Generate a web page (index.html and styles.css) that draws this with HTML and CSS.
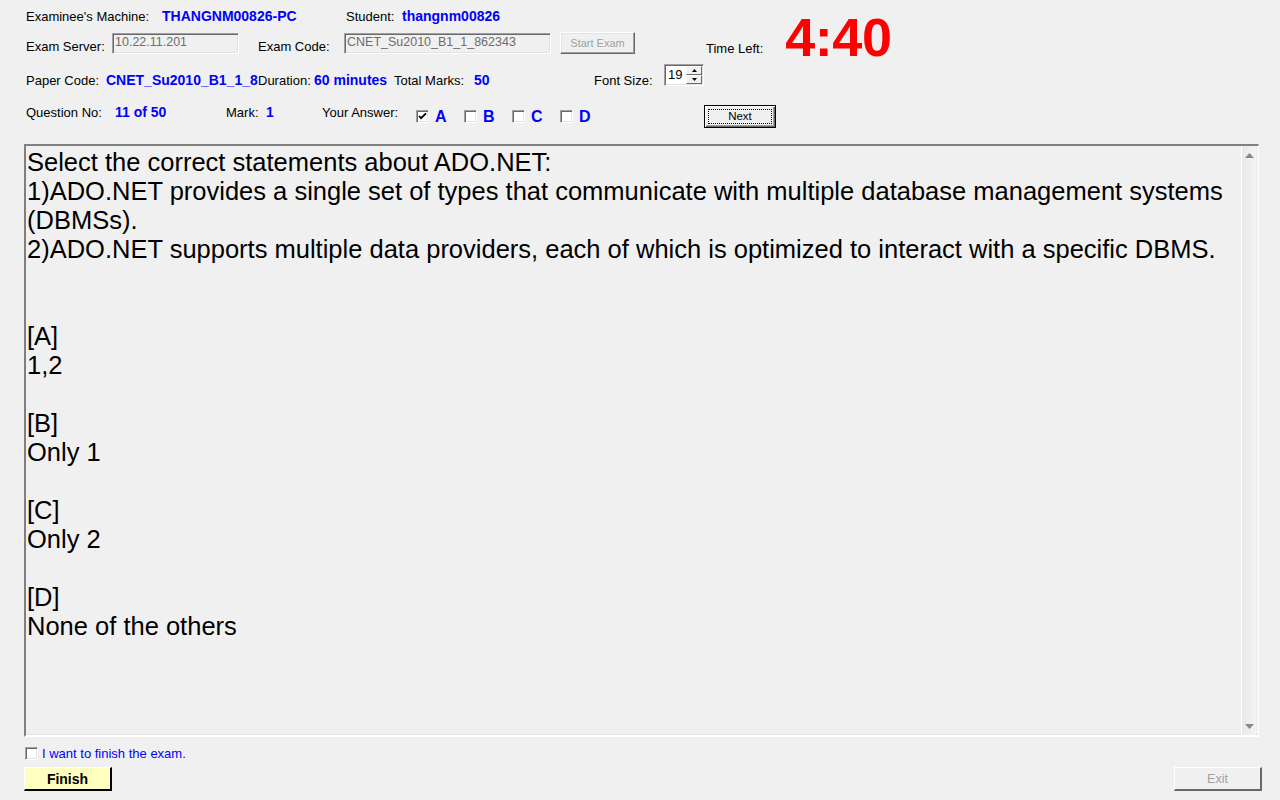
FILE: index.html
```html
<!DOCTYPE html>
<html>
<head>
<meta charset="utf-8">
<link rel="stylesheet" href="styles.css">
</head>
<body>
<div class="form">
  <div class="row r1">
    <span class="lbl w136">Examinee's Machine:</span>
    <span class="val w184">THANGNM00826-PC</span>
    <span class="lbl w56">Student:</span>
    <span class="val">thangnm00826</span>
  </div>
  <div class="row r2">
    <span class="lbl w86 low">Exam Server:</span>
    <span class="tbox w127">10.22.11.201</span>
    <span class="lbl w86 low ml19">Exam Code:</span>
    <span class="tbox w207">CNET_Su2010_B1_1_862343</span>
    <span class="btn start">Start Exam</span>
    <span class="lbl low timelbl">Time Left:</span>
    <span class="timer">4:40</span>
  </div>
  <div class="row r3">
    <span class="lbl w80">Paper Code:</span>
    <span class="val w152 clip">CNET_Su2010_B1_1_862343</span>
    <span class="lbl w56">Duration:</span>
    <span class="val w80">60 minutes</span>
    <span class="lbl w80">Total Marks:</span>
    <span class="val w120">50</span>
    <span class="lbl w70">Font Size:</span>
    <span class="updown">
      <span class="udval">19</span>
      <span class="udbtns">
        <span class="udb"><svg width="5" height="3" viewBox="0 0 5 3"><path d="M2.5 0L5 3H0z" fill="#000"/></svg></span>
        <span class="udb"><svg width="5" height="3" viewBox="0 0 5 3"><path d="M0 0H5L2.5 3z" fill="#000"/></svg></span>
      </span>
    </span>
  </div>
  <div class="row r4">
    <span class="lbl w89">Question No:</span>
    <span class="val w111">11 of 50</span>
    <span class="lbl w40">Mark:</span>
    <span class="val w56">1</span>
    <span class="lbl w94">Your Answer:</span>
    <span class="opt"><span class="cb"><svg width="9" height="9" viewBox="0 0 9 9"><path d="M1 4l2 2.2L8 1.3" stroke="#000" stroke-width="1.8" fill="none"/></svg></span><span class="optl">A</span></span>
    <span class="opt"><span class="cb"></span><span class="optl">B</span></span>
    <span class="opt"><span class="cb"></span><span class="optl">C</span></span>
    <span class="opt"><span class="cb"></span><span class="optl">D</span></span>
    <span class="btn next"><span class="focus">Next</span></span>
  </div>
  <div class="qbox">
    <div class="qtext">
      <div class="ln">Select the correct statements about ADO.NET:</div>
      <div class="ln">1)ADO.NET provides a single set of types that communicate with multiple database management systems</div>
      <div class="ln">(DBMSs).</div>
      <div class="ln">2)ADO.NET supports multiple data providers, each of which is optimized to interact with a specific DBMS.</div>
      <div class="ln">&nbsp;</div>
      <div class="ln">&nbsp;</div>
      <div class="ln">[A]</div>
      <div class="ln">1,2</div>
      <div class="ln">&nbsp;</div>
      <div class="ln">[B]</div>
      <div class="ln">Only 1</div>
      <div class="ln">&nbsp;</div>
      <div class="ln">[C]</div>
      <div class="ln">Only 2</div>
      <div class="ln">&nbsp;</div>
      <div class="ln">[D]</div>
      <div class="ln">None of the others</div>
    </div>
    <div class="vscroll">
      <span class="arr"><svg width="9" height="5" viewBox="0 0 9 5"><path d="M4.5 0L9 5H0z" fill="#888"/></svg></span>
      <span class="arr"><svg width="9" height="5" viewBox="0 0 9 5"><path d="M0 0H9L4.5 5z" fill="#888"/></svg></span>
    </div>
  </div>
  <div class="finishrow">
    <span class="cb fcb"></span><span class="finlbl">I want to finish the exam.</span>
  </div>
  <div class="btnrow">
    <span class="btn finish">Finish</span>
    <span class="btn exit">Exit</span>
  </div>
</div>
</body>
</html>
```

FILE: styles.css
```css
html, body {
  margin: 0;
  padding: 0;
  background: #f0f0f0;
}
body {
  width: 1280px;
  height: 800px;
  overflow: hidden;
  font-family: "Liberation Sans", Arial, sans-serif;
  font-size: 13px;
  color: #000;
}
.form {
  padding-left: 26px;
}
.row {
  display: flex;
  align-items: center;
  white-space: nowrap;
}
.lbl, .val {
  display: inline-block;
  flex: none;
}
.val {
  color: #0000ff;
  font-weight: bold;
  font-size: 14px;
}
.clip { overflow: hidden; }
.w40 { width: 40px; }
.w56 { width: 56px; }
.w70 { width: 70px; }
.w80 { width: 80px; }
.w86 { width: 86px; }
.w89 { width: 89px; }
.w94 { width: 94px; }
.w111 { width: 111px; }
.w120 { width: 120px; }
.w127 { width: 127px; }
.w136 { width: 136px; }
.w152 { width: 152px; }
.w184 { width: 184px; }
.w207 { width: 207px; }
.ml19 { margin-left: 19px; }

.r1 { height: 16px; padding-top: 8px; }
.r2 {
  height: 30px;
  margin-top: 8px;
  align-items: flex-start;
}
.low { margin-top: 7px; }
.tbox {
  flex: none;
  box-sizing: border-box;
  height: 21px;
  margin-top: 1px;
  padding: 1px 2px;
  color: #6d6d6d;
  background: #f0f0f0;
  font-size: 12.5px;
  border-top: 1px solid #a0a0a0;
  border-left: 1px solid #a0a0a0;
  border-right: 1px solid #fff;
  border-bottom: 1px solid #fff;
  box-shadow: inset 1px 1px 0 #696969, inset -1px -1px 0 #e3e3e3;
  overflow: hidden;
}
.btn {
  flex: none;
  box-sizing: border-box;
  display: inline-flex;
  align-items: center;
  justify-content: center;
  background: #f0f0f0;
  font-size: 11px;
}
.start {
  margin-left: 9px;
  width: 75px;
  height: 22px;
  color: #a0a0a0;
  border-top: 1px solid #fff;
  border-left: 1px solid #fff;
  border-right: 1px solid #696969;
  border-bottom: 1px solid #696969;
  box-shadow: inset -1px -1px 0 #a0a0a0, inset 1px 1px 0 #e3e3e3;
}
.timelbl { margin-left: 71px; margin-top: 9px; }
.timer {
  flex: none;
  margin-left: 22px;
  margin-top: -26px;
  color: #ff0000;
  font-weight: bold;
  font-size: 54px;
  line-height: 62px;
  letter-spacing: -0.5px;
}

.r3 { height: 22px; margin-top: 2px; }
.r3 .lbl, .r3 .val { position: relative; top: 5px; }
.updown {
  flex: none;
  box-sizing: border-box;
  width: 40px;
  height: 22px;
  display: flex;
  background: #fff;
  border-top: 1px solid #a0a0a0;
  border-left: 1px solid #a0a0a0;
  border-right: 1px solid #fff;
  border-bottom: 1px solid #fff;
  box-shadow: inset 1px 1px 0 #696969, inset -1px -1px 0 #e3e3e3;
  padding: 1px 1px 1px 3px;
}
.udval {
  flex: 1;
  font-size: 13px;
  line-height: 17px;
}
.udbtns {
  width: 16px;
  display: flex;
  flex-direction: column;
}
.udb {
  flex: 1;
  box-sizing: border-box;
  display: flex;
  align-items: center;
  justify-content: center;
  background: #f0f0f0;
  border-top: 1px solid #fff;
  border-left: 1px solid #fff;
  border-right: 1px solid #696969;
  border-bottom: 1px solid #696969;
}

.r4 { height: 24px; margin-top: 18px; }
.r4 .lbl, .r4 .val { position: relative; top: -4px; }
.opt {
  flex: none;
  width: 48px;
  display: flex;
  align-items: center;
}
.cb {
  flex: none;
  box-sizing: border-box;
  width: 13px;
  height: 13px;
  display: inline-flex;
  align-items: center;
  justify-content: center;
  background: #fff;
  border-top: 1px solid #a0a0a0;
  border-left: 1px solid #a0a0a0;
  border-right: 1px solid #fff;
  border-bottom: 1px solid #fff;
  box-shadow: inset 1px 1px 0 #696969, inset -1px -1px 0 #e3e3e3;
}
.optl {
  margin-left: 6px;
  color: #0000ff;
  font-weight: bold;
  font-size: 16px;
  position: relative;
  top: 1px;
}
.next {
  margin-left: 96px;
  width: 72px;
  height: 23px;
  border: 1px solid #000;
  box-shadow: inset 1px 1px 0 #fff, inset -1px -1px 0 #696969, inset -2px -2px 0 #a0a0a0;
  padding: 3px;
  font-size: 11.5px;
}
.focus {
  box-sizing: border-box;
  width: 100%;
  height: 100%;
  border: 1px dotted #000;
  display: flex;
  align-items: center;
  justify-content: center;
}

.qbox {
  box-sizing: border-box;
  margin-left: -2px;
  margin-top: 16px;
  width: 1235px;
  height: 593px;
  display: flex;
  background: #f0f0f0;
  border-top: 2px solid #808080;
  border-left: 2px solid #808080;
  border-right: 1px solid #fff;
  border-bottom: 2px solid #fff;
  box-shadow: inset 0 -1px 0 #e3e3e3;
}
.qtext {
  flex: 1;
  padding: 2px 0 0 1px;
  font-size: 25.5px;
  line-height: 29px;
  white-space: nowrap;
  overflow: hidden;
}
.vscroll {
  flex: none;
  width: 14px;
  margin-right: 2px;
  border-left: 1px solid #fff;
  background: linear-gradient(to right, #e8e8e8, #f4f4f4);
  display: flex;
  flex-direction: column;
  justify-content: space-between;
  align-items: center;
  padding: 7px 0 6px;
}
.arr { display: flex; }

.finishrow {
  display: flex;
  align-items: center;
  margin-top: 9px;
  margin-left: -1px;
}
.finlbl {
  margin-left: 4px;
  color: #0000ff;
}
.btnrow {
  display: flex;
  justify-content: space-between;
  margin-left: -2px;
  width: 1238px;
  margin-top: 6px;
}
.finish {
  width: 88px;
  height: 24px;
  background: #ffffc0;
  font-weight: bold;
  font-size: 14px;
  border-top: 1px solid #fff;
  border-left: 1px solid #fff;
  border-right: 2px solid #000;
  border-bottom: 2px solid #000;
}
.exit {
  width: 88px;
  height: 24px;
  color: #a0a0a0;
  font-size: 12.5px;
  border-top: 1px solid #fff;
  border-left: 1px solid #fff;
  border-right: 2px solid #696969;
  border-bottom: 2px solid #696969;
}
```
